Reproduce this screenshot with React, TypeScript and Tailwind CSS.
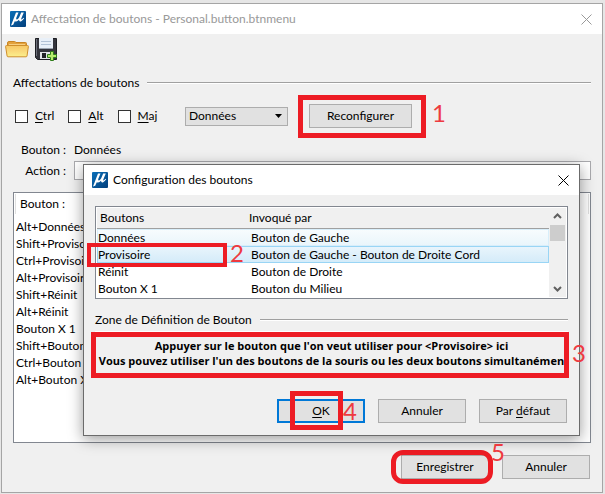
import React, {useState} from 'react';

const assignments = [
    'Alt+Données',
    'Shift+Provisoire',
    'Ctrl+Provisoire',
    'Alt+Provisoire',
    'Shift+Réinit',
    'Alt+Réinit',
    'Bouton X 1',
    'Shift+Bouton X 1',
    'Ctrl+Bouton X 1',
    'Alt+Bouton X 1',
];

const buttonMap = [
    {name: 'Données', trigger: 'Bouton de Gauche'},
    {name: 'Provisoire', trigger: 'Bouton de Gauche - Bouton de Droite Cord'},
    {name: 'Réinit', trigger: 'Bouton de Droite'},
    {name: 'Bouton X 1', trigger: 'Bouton du Milieu'},
];

const modifiers = [
    {id: 'ctrl', first: 'C', rest: 'trl'},
    {id: 'alt', first: 'A', rest: 'lt'},
    {id: 'maj', first: 'M', rest: 'aj'},
];

function AppLogo() {
    return (
        <svg width="16" height="16" viewBox="0 0 16 16" className="shrink-0">
            <defs>
                <linearGradient id="logo" x1="0" y1="0" x2="1" y2="1">
                    <stop offset="0" stopColor="#0a6fb8" />
                    <stop offset="1" stopColor="#04407c" />
                </linearGradient>
            </defs>
            <rect width="16" height="16" rx="1" fill="url(#logo)" />
            <path d="M6 1.6 L1 14.6 L3.2 13.8 L4.8 10.2 Q7 11.2 9 8.8 Q9.2 11 11.2 10.2 Q12.8 9.4 14.2 7.2 L13.6 6.8 Q11.8 8.8 11.2 8.4 Q11 8 11.6 6.8 L13.8 1.6 L11.2 1.6 L9.2 6.2 Q7.8 8.8 6.6 8.6 Q5.8 8.2 6.4 6.6 L8.5 1.6 Z" fill="#fff" />
        </svg>
    );
}

function FolderIcon() {
    return (
        <svg width="24" height="18" viewBox="0 0 24 18">
            <defs>
                <linearGradient id="folder" x1="0" y1="0" x2="0" y2="1">
                    <stop offset="0" stopColor="#f7c765" />
                    <stop offset="0.5" stopColor="#fad97b" />
                    <stop offset="1" stopColor="#fbf08c" />
                </linearGradient>
            </defs>
            <path d="M2.5 7 V3 Q2.5 1.5 4 1.5 H9.5 Q10.5 1.5 11 2.5 H20.5 Q21.5 2.5 21.5 3.5 V7" fill="#e3a13c" stroke="#c98524" />
            <path d="M4 4.5 H20" stroke="#f7cf82" />
            <path d="M0.6 6.6 Q0.5 5.5 1.5 5.5 H22.5 Q23.5 5.5 23.4 6.6 L22 16 Q21.9 16.8 21 16.8 H3 Q2.2 16.8 2.1 16 Z" fill="url(#folder)" stroke="#cf8f2c" />
        </svg>
    );
}

function SaveIcon() {
    return (
        <svg width="24" height="24" viewBox="0 0 24 24">
            <path d="M1.5 1.5 H22.5 V22.5 H3.5 L1.5 20.5 Z" fill="#34353d" stroke="#1d1e23" />
            <path d="M2.5 2 V19" stroke="#6d707b" />
            <rect x="5" y="1" width="14" height="11" fill="#e9f0f8" />
            <path d="M7 4.5 H17 M7 7.5 H17" stroke="#b3c3d6" />
            <path d="M5 11.5 H19" stroke="#9aa3ae" />
            <rect x="6" y="15" width="11" height="7" fill="#e2e4e8" />
            <rect x="8" y="16" width="4" height="5" fill="#222329" />
            <path d="M16.5 14.5 H19.5 V17.5 H22.5 V20.5 H19.5 V23.5 H16.5 V20.5 H13.5 V17.5 H16.5 Z" fill="#b6ec6c" stroke="#2f7d1c" />
        </svg>
    );
}

function CloseIcon() {
    return (
        <svg width="11" height="11" viewBox="0 0 11 11">
            <path d="M0.5 0.5 L10.5 10.5 M10.5 0.5 L0.5 10.5" stroke="currentColor" fill="none" />
        </svg>
    );
}

function Mark({className, children}: {className: string; children: React.ReactNode}) {
    return (
        <span className={`absolute z-20 font-['Lato',sans-serif] text-2xl leading-6 text-[#ee3a40] ${className}`}>{children}</span>
    );
}

function GroupTitle({children}: {children: React.ReactNode}) {
    return (
        <div className="flex items-center gap-2">
            <h2>{children}</h2>
            <div className="h-0.5 flex-1 border-t border-[#a0a0a0] bg-white" />
        </div>
    );
}

const buttonClass = 'h-6 w-22 border border-[#adadad] bg-[#e1e1e1] text-center';

function ConfigDialog() {
    const [selected, setSelected] = useState('Provisoire');

    return (
        <section className="absolute top-[164px] right-[25px] left-[83px] z-10 border border-[#6b6b6b] bg-[#f0f0f0] shadow-[0_3px_14px_rgba(0,0,0,0.4)]">
            <header className="flex h-[30px] items-center gap-[5px] bg-white pr-[10px] pl-2">
                <AppLogo />
                <h1 className="flex-1">Configuration des boutons</h1>
                <button type="button" aria-label="Fermer"><CloseIcon /></button>
            </header>
            <div className="px-[11px] pt-[11px] pb-3">
                <div className="relative flex border border-[#828790] bg-white p-px">
                    <table className="flex-1 table-fixed border-separate border-spacing-0 text-left">
                        <thead>
                            <tr className="h-[21px] bg-[#f0f0f0]">
                                <th className="w-[152px] border-b border-[#a0a0a0] pl-[3px] font-normal">Boutons</th>
                                <th className="border-b border-[#a0a0a0] font-normal">Invoqué par</th>
                            </tr>
                        </thead>
                        <tbody>
                            {buttonMap.map((item) => (
                                <tr
                                    key={item.name}
                                    onClick={() => setSelected(item.name)}
                                    className={
                                        item.name === selected
                                            ? 'bg-linear-to-b from-[#eaf5fc] to-[#d3ebf9] outline outline-offset-[-1px] outline-[#99d5f5]'
                                            : item.name === 'Données'
                                                ? 'bg-linear-to-b from-[#f8fcfe] to-[#e9f5fb] outline outline-offset-[-1px] outline-[#d8eefa]'
                                                : ''
                                    }
                                >
                                    <td className="pt-px pl-px leading-4">{item.name}</td>
                                    <td className="pt-px pl-0.5 leading-4">{item.trigger}</td>
                                </tr>
                            ))}
                        </tbody>
                    </table>
                    <div className="flex w-[17px] flex-col items-center bg-[#f0f0f0] text-[#606060]">
                        <svg width="9" height="17" viewBox="0 0 9 17">
                            <path d="M1 10 L4.5 6.5 L8 10" fill="none" stroke="currentColor" strokeWidth="2" />
                        </svg>
                        <div className="h-4 w-[15px] bg-[#cdcdcd]" />
                        <div className="flex-1" />
                        <svg width="9" height="17" viewBox="0 0 9 17">
                            <path d="M1 7 L4.5 10.5 L8 7" fill="none" stroke="currentColor" strokeWidth="2" />
                        </svg>
                    </div>
                    <div className="absolute top-9 -left-[9px] h-6 w-[140px] border-4 border-[#ed1c24]" />
                    <Mark className="top-[34px] left-[134px]">2</Mark>
                </div>
                <div className="pt-[13px]">
                    <GroupTitle>Zone de Définition de Bouton</GroupTitle>
                </div>
                <div className="relative mt-[3px] border-t border-white pt-[6px]">
                    <p className="pb-[27px] text-center text-[11px] font-bold font-['Open_Sans','Noto_Sans',sans-serif] leading-[15px] whitespace-nowrap">
                        Appuyer sur le bouton que l'on veut utiliser pour &lt;Provisoire&gt; ici<br />
                        Vous pouvez utiliser l'un des boutons de la souris ou les deux boutons simultanémen
                    </p>
                    <div className="absolute top-0 -right-px -left-1 h-[46px] border-[5px] border-[#ed1c24]" />
                    <Mark className="top-[9px] -right-[18px]">3</Mark>
                </div>
                <div className="flex justify-end gap-[13px] pt-1 pr-px">
                    <div className="relative">
                        <button type="button" className="h-6 w-22 border-2 border-[#0078d7] bg-[#e1e1e1] text-center"><u className="underline-offset-2">O</u>K</button>
                        <div className="absolute -top-2 left-[13px] h-[39px] w-[53px] border-[5px] border-[#ed1c24]" />
                        <Mark className="top-0 left-[66px]">4</Mark>
                    </div>
                    <button type="button" className={buttonClass}>Annuler</button>
                    <button type="button" className={buttonClass}>Par <u className="underline-offset-2">d</u>éfaut</button>
                </div>
            </div>
        </section>
    );
}

export default function App() {
    const [source, setSource] = useState('Données');
    const [action, setAction] = useState('');

    return (
        <div className="relative flex min-h-screen flex-col bg-[#e6e6e6] pt-[3px] pr-0.5 pb-px pl-px font-['Lato',sans-serif] text-xs leading-4 text-black">
            <main className="flex flex-1 flex-col border border-[#a5a5a5] bg-[#f0f0f0]">
                <header className="flex h-[30px] items-center gap-[5px] bg-white pr-[10px] pl-2 text-[#999999]">
                    <AppLogo />
                    <h1 className="flex-1">Affectation de boutons - Personal.button.btnmenu</h1>
                    <button type="button" aria-label="Fermer"><CloseIcon /></button>
                </header>
                <div className="flex items-center gap-[5px] px-[3px] pt-[3px]">
                    <button type="button" aria-label="Ouvrir"><FolderIcon /></button>
                    <button type="button" aria-label="Enregistrer sous"><SaveIcon /></button>
                </div>
                <div className="flex flex-1 flex-col px-[11px] pt-[14px] pb-[13px]">
                    <GroupTitle>Affectations de boutons</GroupTitle>
                    <div className="flex items-center pt-[13px] pl-0.5">
                        <div className="flex w-[170px] gap-[14px]">
                            {modifiers.map((item) => (
                                <label key={item.id} className="flex items-center gap-[7px]">
                                    <input type="checkbox" className="size-[13px] appearance-none border border-[#333333] bg-white checked:bg-[#0078d7]" />
                                    <span><u className="underline-offset-2">{item.first}</u>{item.rest}</span>
                                </label>
                            ))}
                        </div>
                        <div className="relative">
                            <select
                                aria-label="Bouton"
                                value={source}
                                onChange={(e) => setSource(e.target.value)}
                                className="block h-[19px] w-[103px] appearance-none border border-[#adadad] bg-[#e1e1e1] pl-[3px]"
                            >
                                <option>Données</option>
                                <option>Provisoire</option>
                                <option>Réinit</option>
                            </select>
                            <svg width="7" height="4" viewBox="0 0 7 4" className="pointer-events-none absolute top-[7px] right-[6px]">
                                <path d="M0 0 H7 L3.5 4 Z" fill="#000" />
                            </svg>
                        </div>
                        <div className="relative ml-[21px]">
                            <button type="button" className="block h-6 w-[103px] border border-[#adadad] bg-[#e1e1e1] text-center">Reconfigurer</button>
                            <div className="absolute -top-[9px] -right-[14px] -bottom-[10px] -left-[11px] border-[5px] border-[#ed1c24]" />
                            <Mark className="-top-[3px] left-[123px]">1</Mark>
                        </div>
                    </div>
                    <div className="flex items-center gap-2 pt-[14px]">
                        <span className="w-[53px] text-right">Bouton :</span>
                        <span>{source}</span>
                    </div>
                    <div className="flex items-center gap-2 pt-[3px]">
                        <label htmlFor="action" className="w-[53px] text-right">Action :</label>
                        <input
                            id="action"
                            type="text"
                            value={action}
                            onChange={(e) => setAction(e.target.value)}
                            className="h-[19px] min-w-0 flex-1 border border-[#a9a9ad] bg-white px-1"
                        />
                    </div>
                    <div className="mt-3 flex-1 border border-[#828790] bg-white p-px">
                        <div className="mb-1 border-x border-[#e0e0e0] px-1 py-0.5">Bouton :</div>
                        <ul>
                            {assignments.map((item) => (
                                <li key={item} className="pl-px leading-[17px]">{item}</li>
                            ))}
                        </ul>
                    </div>
                    <div className="flex justify-end gap-[13px] pt-3 pr-px">
                        <div className="relative">
                            <button type="button" className={buttonClass}>Enregistrer</button>
                            <div className="absolute -top-[5px] -left-[10px] h-[34px] w-[102px] rounded-xl border-[5px] border-[#ed1c24]" />
                            <Mark className="-top-[15px] left-[90px]">5</Mark>
                        </div>
                        <button type="button" className={buttonClass}>Annuler</button>
                    </div>
                </div>
            </main>
            <ConfigDialog />
        </div>
    );
}
